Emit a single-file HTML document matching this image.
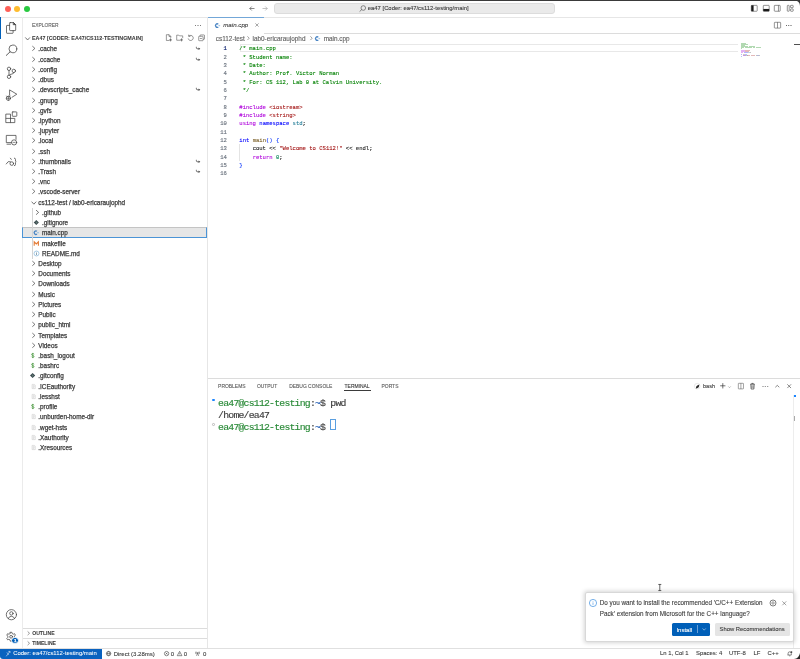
<!DOCTYPE html>
<html><head><meta charset="utf-8">
<style>
*{box-sizing:border-box;margin:0;padding:0}
html,body{width:800px;height:659px;overflow:hidden;background:#fff}
body{position:relative;font-family:"Liberation Sans",sans-serif;color:#3b3b3b}
.a{position:absolute}
.t{position:absolute;white-space:pre;line-height:1;-webkit-text-stroke:0.25px currentColor}
svg{position:absolute;overflow:visible}
.wrap{position:absolute;left:0;top:0;width:800px;height:659px;will-change:transform}
.mono{font-family:"Liberation Mono",monospace}
.ln{position:absolute;white-space:pre;font-family:"Liberation Mono",monospace;font-size:5.55px;height:8.333px;line-height:8.333px;-webkit-text-stroke:0.1px currentColor}
.ln span{-webkit-text-stroke:0.1px currentColor}
.num{position:absolute;width:12px;text-align:right;font-family:"Liberation Mono",monospace;font-size:5.55px;height:8.333px;line-height:8.333px;color:#6e7681;-webkit-text-stroke:0.15px currentColor}
.cm{color:#008000}.kw{color:#af00db}.st{color:#a31515}.bl{color:#0000ff}.ty{color:#267f99}.fn{color:#795e26}.vr{color:#1f1f1f}.nm{color:#098658}.b1{color:#0431fa}
.term{position:absolute;white-space:pre;font-family:"Liberation Mono",monospace;font-size:9.8px;letter-spacing:-0.78px;line-height:12px;height:12px;-webkit-text-stroke:0.15px currentColor}
.term span{-webkit-text-stroke:0.15px currentColor}
.tg{color:#2a8a38}
</style></head><body><div class="wrap">
<!-- top dark line -->
<div class="a" style="left:0;top:0;width:800px;height:1px;background:#3a3a3a"></div>
<!-- title bar -->
<svg style="left:794px;top:0" width="6" height="6" viewBox="0 0 6 6"><path d="M0 0 H6 V6 Q6 1 0 0Z" fill="#3a3a3a"/></svg>
<div class="a" style="left:0;top:16.6px;width:800px;height:0.5px;background:#e6e6e6"></div>
<div class="a" style="left:5.2px;top:5.9px;width:6px;height:6px;border-radius:50%;background:#fe5f57"></div>
<div class="a" style="left:14.3px;top:5.9px;width:6px;height:6px;border-radius:50%;background:#febc2e"></div>
<div class="a" style="left:24px;top:5.9px;width:6px;height:6px;border-radius:50%;background:#28c840"></div>
<!-- nav arrows -->
<svg style="left:249px;top:6.3px" width="6" height="5" viewBox="0 0 12 10"><path d="M11 5 H1.5 M5.5 1 L1.5 5 L5.5 9" fill="none" stroke="#3b3b3b" stroke-width="1.2"/></svg>
<svg style="left:261.5px;top:6.3px" width="6" height="5" viewBox="0 0 12 10"><path d="M1 5 H10.5 M6.5 1 L10.5 5 L6.5 9" fill="none" stroke="#9a9a9a" stroke-width="1.2"/></svg>
<!-- command center -->
<div class="a" style="left:273.5px;top:2.9px;width:281px;height:11px;border-radius:3px;background:#eaeaea;border:0.5px solid #dcdcdc"></div>
<svg style="left:358.7px;top:5.4px" width="7" height="7" viewBox="0 0 7 7"><circle cx="4.3" cy="3" r="2.3" fill="none" stroke="#444" stroke-width="0.6"/><path d="M2.7 4.6 L0.6 6.6" stroke="#444" stroke-width="0.65"/></svg>
<div class="t" style="left:367.8px;top:6.0px;font-size:5.89px;color:#3b3b3b;-webkit-text-stroke:0.1px #3b3b3b">ea47 [Coder: ea47/cs112-testing/main]</div>
<!-- layout icons -->
<svg style="left:750.5px;top:5.3px" width="6.5" height="6.6" viewBox="0 0 13 13"><rect x="0.6" y="0.6" width="11.8" height="11.8" rx="1.2" fill="none" stroke="#3b3b3b" stroke-width="1.1"/><rect x="0.6" y="0.6" width="4.6" height="11.8" fill="#1a1a1a"/></svg>
<svg style="left:762.5px;top:5.3px" width="6.5" height="6.6" viewBox="0 0 13 13"><rect x="0.6" y="0.6" width="11.8" height="11.8" rx="1.2" fill="none" stroke="#3b3b3b" stroke-width="1.1"/><rect x="0.6" y="7.8" width="11.8" height="4.6" fill="#1a1a1a"/></svg>
<svg style="left:774.3px;top:5.3px" width="6.5" height="6.6" viewBox="0 0 13 13"><rect x="0.6" y="0.6" width="11.8" height="11.8" rx="1.2" fill="none" stroke="#3b3b3b" stroke-width="1.1"/><path d="M8.9 0.6 V12.4" stroke="#3b3b3b" stroke-width="1.1"/></svg>
<svg style="left:787px;top:5.3px" width="6.5" height="6.6" viewBox="0 0 13 13"><rect x="0.6" y="0.6" width="3.8" height="11.8" rx="1" fill="none" stroke="#3b3b3b" stroke-width="1.1"/><rect x="7" y="0.6" width="5.4" height="4.6" rx="1" fill="none" stroke="#3b3b3b" stroke-width="1.1"/><rect x="7" y="7.8" width="5.4" height="4.6" rx="1" fill="none" stroke="#3b3b3b" stroke-width="1.1"/></svg>

<!-- activity bar -->
<div class="a" style="left:22px;top:16.8px;width:0.5px;height:631.4px;background:#ebebeb"></div>
<div class="a" style="left:0;top:16.8px;width:1px;height:22.2px;background:#005fb8"></div>
<svg style="left:0;top:0" width="22" height="659" viewBox="0 0 22 659" fill="none" stroke="#424242" stroke-width="0.75" stroke-linejoin="round" stroke-linecap="round">
<!-- explorer -->
<path d="M10.2 22.6 H13.6 L15.7 24.7 V30 Q15.7 30.6 15.1 30.6 H10.2 Q9.6 30.6 9.6 30 V23.2 Q9.6 22.6 10.2 22.6Z"/>
<path d="M13.6 22.6 L15.7 24.7 H13.6Z" fill="#424242"/>
<path d="M9.6 25.4 H7 Q6.5 25.4 6.5 25.9 V32.8 Q6.5 33.3 7 33.3 H12.6 Q13.1 33.3 13.1 32.8 V30.6"/>
<!-- search -->
<circle cx="12.9" cy="48.9" r="3.9"/>
<path d="M10.1 51.8 L6.3 55.4" stroke-width="0.85"/>
<!-- scm -->
<circle cx="9" cy="68.8" r="1.7"/>
<circle cx="9" cy="76.8" r="1.7"/>
<circle cx="13.8" cy="70.9" r="1.7"/>
<path d="M9 70.5 V75.1"/>
<path d="M13.8 72.6 Q13.8 73.8 12 74 Q9.6 74.2 9.4 75.2"/>
<!-- run & debug -->
<path d="M9.6 95.3 V89.9 L16.8 94.2 L12 97.3"/>
<circle cx="8.4" cy="98.3" r="2.1"/>
<path d="M6.3 98.3 H10.5 M8.4 96.2 V100.4 M6.6 96 L7.3 96.8 M10.2 96 L9.5 96.8" stroke-width="0.6"/>
<!-- extensions -->
<path d="M6.2 114.1 H10.5 V122.6 H6.2Z M6.2 118.4 H14.8 V122.6 H10.5"/>
<rect x="12.3" y="111.9" width="4.5" height="4.4" rx="0.5"/>
<!-- remote explorer -->
<path d="M11.4 142.6 H6.3 V135.4 H16 V139.4"/>
<path d="M7 144.2 H10.6"/>
<circle cx="14.1" cy="142.4" r="2.6"/>
<path d="M13 142.4 H15.2" stroke-width="0.6"/>
<!-- 7th -->
<path d="M6.2 163.9 Q8 160.3 10.4 161.6"/>
<circle cx="11.8" cy="163.6" r="1.8"/>
<path d="M10.4 158.2 L11.3 159.4"/>
<path d="M14.4 158.1 Q15.5 158.1 15.5 159.5 V161.2 L16.2 161.9 L15.5 162.6 V164.3 Q15.5 165.7 14.4 165.7"/>
<!-- account -->
<circle cx="11.4" cy="614.7" r="5.1"/>
<circle cx="11.4" cy="613.4" r="1.7"/>
<path d="M8.2 618.6 Q9 616.3 11.4 616.3 Q13.8 616.3 14.6 618.6"/>
<!-- gear -->
<path d="M10.3 632.3 H11.9 L12.2 633.6 L13.3 634.2 L14.6 633.7 L15.4 635.1 L14.4 636.1 V637.4 L15.4 638.4 L14.6 639.8 L13.3 639.3 L12.2 639.9 L11.9 641.2 H10.3 L10 639.9 L8.9 639.3 L7.6 639.8 L6.8 638.4 L7.8 637.4 V636.1 L6.8 635.1 L7.6 633.7 L8.9 634.2 L10 633.6Z"/>
<circle cx="11.1" cy="636.8" r="1.4"/>
</svg>
<div class="a" style="left:11.4px;top:637.1px;width:7.4px;height:7.4px;border-radius:50%;background:#005fb8;border:0.5px solid #fff"></div>
<div class="t" style="left:13.9px;top:638.9px;font-size:4.4px;font-weight:700;color:#fff">1</div>


<!-- sidebar -->
<div class="a" style="left:207.2px;top:16.8px;width:0.5px;height:631.4px;background:#e6e6e6"></div>
<div class="t" style="left:32px;top:24.2px;font-size:4.9px;color:#616161;-webkit-text-stroke:0.1px #616161">EXPLORER</div>
<div class="t" style="left:194.6px;top:21.6px;font-size:6px;color:#555;letter-spacing:0.5px">···</div>
<svg style="left:24.8px;top:37.1px" width="5.2" height="3.4" viewBox="0 0 5.2 3.4"><path d="M0.3 0.45 L2.6 3 L4.9 0.45" fill="none" stroke="#4a4a4a" stroke-width="0.75"/></svg>
<div class="t" style="left:32px;top:36.1px;font-size:5.37px;font-weight:700;color:#3b3b3b;-webkit-text-stroke:0.05px #3b3b3b">EA47 [CODER: EA47/CS112-TESTINGMAIN]</div>
<svg style="left:164.8px;top:34.4px" width="7.4" height="7.4" viewBox="0 0 16 16"><path d="M9.5 14 H3 V1.5 H9 L12.5 5 V8.5 M8.7 1.5 V5.5 H12.5" fill="none" stroke="#3b3b3b" stroke-width="1.1" stroke-linejoin="round"/><path d="M12 9.5 V16 M8.8 12.8 H15.2" stroke="#3b3b3b" stroke-width="1.3"/></svg>
<svg style="left:175.7px;top:34.4px" width="7.4" height="7.4" viewBox="0 0 16 16"><path d="M9.5 13.5 H1.5 V2.5 H6 L7.5 4 H14.5 V9" fill="none" stroke="#3b3b3b" stroke-width="1.1" stroke-linejoin="round"/><path d="M12 9.5 V16 M8.8 12.8 H15.2" stroke="#3b3b3b" stroke-width="1.3"/></svg>
<svg style="left:186.6px;top:34.4px" width="7.4" height="7.4" viewBox="0 0 16 16"><path d="M4.1 4.6 A5.5 5.5 0 1 1 2.6 9.8" fill="none" stroke="#3b3b3b" stroke-width="1.2"/><path d="M3.6 1.4 V5.1 H7.3" fill="none" stroke="#3b3b3b" stroke-width="1.2"/></svg>
<svg style="left:197.5px;top:34.4px" width="7.4" height="7.4" viewBox="0 0 16 16"><rect x="1.5" y="5" width="9.5" height="9.5" rx="1" fill="none" stroke="#3b3b3b" stroke-width="1.1"/><path d="M4.5 5 V3 Q4.5 2 5.5 2 H13 Q14 2 14 3 V10.5 Q14 11.5 13 11.5 H11 M4 9.8 H8.5" fill="none" stroke="#3b3b3b" stroke-width="1.1"/></svg>

<!-- selected row -->
<div class="a" style="left:22.4px;top:227.4px;width:184.9px;height:10.2px;background:#e6e6e6;border:0.6px solid #4b94d6;border-top-color:#c4c4c4"></div>
<!-- indent guide -->
<div class="a" style="left:31.9px;top:207.6px;width:0.5px;height:51.4px;background:#d4d4d4"></div>
<div class="t" style="left:38.30px;top:44.40px;height:10.220px;line-height:10.220px;font-size:6.36px;color:#3b3b3b">.cache</div>
<div class="t" style="left:38.30px;top:54.62px;height:10.220px;line-height:10.220px;font-size:6.36px;color:#3b3b3b">.ccache</div>
<div class="t" style="left:38.30px;top:64.84px;height:10.220px;line-height:10.220px;font-size:6.36px;color:#3b3b3b">.config</div>
<div class="t" style="left:38.30px;top:75.06px;height:10.220px;line-height:10.220px;font-size:6.36px;color:#3b3b3b">.dbus</div>
<div class="t" style="left:38.30px;top:85.28px;height:10.220px;line-height:10.220px;font-size:6.36px;color:#3b3b3b">.devscripts_cache</div>
<div class="t" style="left:38.30px;top:95.50px;height:10.220px;line-height:10.220px;font-size:6.36px;color:#3b3b3b">.gnupg</div>
<div class="t" style="left:38.30px;top:105.72px;height:10.220px;line-height:10.220px;font-size:6.36px;color:#3b3b3b">.gvfs</div>
<div class="t" style="left:38.30px;top:115.94px;height:10.220px;line-height:10.220px;font-size:6.36px;color:#3b3b3b">.ipython</div>
<div class="t" style="left:38.30px;top:126.16px;height:10.220px;line-height:10.220px;font-size:6.36px;color:#3b3b3b">.jupyter</div>
<div class="t" style="left:38.30px;top:136.38px;height:10.220px;line-height:10.220px;font-size:6.36px;color:#3b3b3b">.local</div>
<div class="t" style="left:38.30px;top:146.60px;height:10.220px;line-height:10.220px;font-size:6.36px;color:#3b3b3b">.ssh</div>
<div class="t" style="left:38.30px;top:156.82px;height:10.220px;line-height:10.220px;font-size:6.36px;color:#3b3b3b">.thumbnails</div>
<div class="t" style="left:38.30px;top:167.04px;height:10.220px;line-height:10.220px;font-size:6.36px;color:#3b3b3b">.Trash</div>
<div class="t" style="left:38.30px;top:177.26px;height:10.220px;line-height:10.220px;font-size:6.36px;color:#3b3b3b">.vnc</div>
<div class="t" style="left:38.30px;top:187.48px;height:10.220px;line-height:10.220px;font-size:6.36px;color:#3b3b3b">.vscode-server</div>
<div class="t" style="left:38.30px;top:197.70px;height:10.220px;line-height:10.220px;font-size:6.36px;color:#3b3b3b">cs112-test / lab0-ericaraujophd</div>
<div class="t" style="left:42.00px;top:207.92px;height:10.220px;line-height:10.220px;font-size:6.36px;color:#3b3b3b">.github</div>
<div class="t" style="left:42.00px;top:218.14px;height:10.220px;line-height:10.220px;font-size:6.36px;color:#3b3b3b">.gitignore</div>
<div class="t" style="left:42.00px;top:228.36px;height:10.220px;line-height:10.220px;font-size:6.36px;color:#3b3b3b">main.cpp</div>
<div class="t" style="left:42.00px;top:238.58px;height:10.220px;line-height:10.220px;font-size:6.36px;color:#3b3b3b">makefile</div>
<div class="t" style="left:42.00px;top:248.80px;height:10.220px;line-height:10.220px;font-size:6.36px;color:#3b3b3b">README.md</div>
<div class="t" style="left:38.30px;top:259.02px;height:10.220px;line-height:10.220px;font-size:6.36px;color:#3b3b3b">Desktop</div>
<div class="t" style="left:38.30px;top:269.24px;height:10.220px;line-height:10.220px;font-size:6.36px;color:#3b3b3b">Documents</div>
<div class="t" style="left:38.30px;top:279.46px;height:10.220px;line-height:10.220px;font-size:6.36px;color:#3b3b3b">Downloads</div>
<div class="t" style="left:38.30px;top:289.68px;height:10.220px;line-height:10.220px;font-size:6.36px;color:#3b3b3b">Music</div>
<div class="t" style="left:38.30px;top:299.90px;height:10.220px;line-height:10.220px;font-size:6.36px;color:#3b3b3b">Pictures</div>
<div class="t" style="left:38.30px;top:310.12px;height:10.220px;line-height:10.220px;font-size:6.36px;color:#3b3b3b">Public</div>
<div class="t" style="left:38.30px;top:320.34px;height:10.220px;line-height:10.220px;font-size:6.36px;color:#3b3b3b">public_html</div>
<div class="t" style="left:38.30px;top:330.56px;height:10.220px;line-height:10.220px;font-size:6.36px;color:#3b3b3b">Templates</div>
<div class="t" style="left:38.30px;top:340.78px;height:10.220px;line-height:10.220px;font-size:6.36px;color:#3b3b3b">Videos</div>
<div class="t" style="left:38.30px;top:351.00px;height:10.220px;line-height:10.220px;font-size:6.36px;color:#3b3b3b">.bash_logout</div>
<div class="t" style="left:38.30px;top:361.22px;height:10.220px;line-height:10.220px;font-size:6.36px;color:#3b3b3b">.bashrc</div>
<div class="t" style="left:38.30px;top:371.44px;height:10.220px;line-height:10.220px;font-size:6.36px;color:#3b3b3b">.gitconfig</div>
<div class="t" style="left:38.30px;top:381.66px;height:10.220px;line-height:10.220px;font-size:6.36px;color:#3b3b3b">.ICEauthority</div>
<div class="t" style="left:38.30px;top:391.88px;height:10.220px;line-height:10.220px;font-size:6.36px;color:#3b3b3b">.lesshst</div>
<div class="t" style="left:38.30px;top:402.10px;height:10.220px;line-height:10.220px;font-size:6.36px;color:#3b3b3b">.profile</div>
<div class="t" style="left:38.30px;top:412.32px;height:10.220px;line-height:10.220px;font-size:6.36px;color:#3b3b3b">.unburden-home-dir</div>
<div class="t" style="left:38.30px;top:422.54px;height:10.220px;line-height:10.220px;font-size:6.36px;color:#3b3b3b">.wget-hsts</div>
<div class="t" style="left:38.30px;top:432.76px;height:10.220px;line-height:10.220px;font-size:6.36px;color:#3b3b3b">.Xauthority</div>
<div class="t" style="left:38.30px;top:442.98px;height:10.220px;line-height:10.220px;font-size:6.36px;color:#3b3b3b">.Xresources</div>
<svg style="left:0;top:0" width="800" height="659" viewBox="0 0 800 659"><svg x="31.90" y="45.80" width="3.4" height="5.2" viewBox="0 0 3.4 5.2"><path d="M0.45 0.3 L3 2.6 L0.45 4.9" fill="none" stroke="#4a4a4a" stroke-width="0.75"/></svg>
<svg x="195.6" y="46.30" width="5" height="4.4" viewBox="0 0 5 4.4"><path d="M0.8 0.5 V1.4 Q0.8 2.5 2 2.5 H3.6" fill="none" stroke="#4a4a4a" stroke-width="0.85"/><path d="M3 1.2 L4.7 2.5 L3 3.8Z" fill="#4a4a4a"/></svg>
<svg x="31.90" y="56.80" width="3.4" height="5.2" viewBox="0 0 3.4 5.2"><path d="M0.45 0.3 L3 2.6 L0.45 4.9" fill="none" stroke="#4a4a4a" stroke-width="0.75"/></svg>
<svg x="195.6" y="57.30" width="5" height="4.4" viewBox="0 0 5 4.4"><path d="M0.8 0.5 V1.4 Q0.8 2.5 2 2.5 H3.6" fill="none" stroke="#4a4a4a" stroke-width="0.85"/><path d="M3 1.2 L4.7 2.5 L3 3.8Z" fill="#4a4a4a"/></svg>
<svg x="31.90" y="66.80" width="3.4" height="5.2" viewBox="0 0 3.4 5.2"><path d="M0.45 0.3 L3 2.6 L0.45 4.9" fill="none" stroke="#4a4a4a" stroke-width="0.75"/></svg>
<svg x="31.90" y="76.80" width="3.4" height="5.2" viewBox="0 0 3.4 5.2"><path d="M0.45 0.3 L3 2.6 L0.45 4.9" fill="none" stroke="#4a4a4a" stroke-width="0.75"/></svg>
<svg x="31.90" y="86.80" width="3.4" height="5.2" viewBox="0 0 3.4 5.2"><path d="M0.45 0.3 L3 2.6 L0.45 4.9" fill="none" stroke="#4a4a4a" stroke-width="0.75"/></svg>
<svg x="195.6" y="87.30" width="5" height="4.4" viewBox="0 0 5 4.4"><path d="M0.8 0.5 V1.4 Q0.8 2.5 2 2.5 H3.6" fill="none" stroke="#4a4a4a" stroke-width="0.85"/><path d="M3 1.2 L4.7 2.5 L3 3.8Z" fill="#4a4a4a"/></svg>
<svg x="31.90" y="97.80" width="3.4" height="5.2" viewBox="0 0 3.4 5.2"><path d="M0.45 0.3 L3 2.6 L0.45 4.9" fill="none" stroke="#4a4a4a" stroke-width="0.75"/></svg>
<svg x="31.90" y="107.80" width="3.4" height="5.2" viewBox="0 0 3.4 5.2"><path d="M0.45 0.3 L3 2.6 L0.45 4.9" fill="none" stroke="#4a4a4a" stroke-width="0.75"/></svg>
<svg x="31.90" y="117.80" width="3.4" height="5.2" viewBox="0 0 3.4 5.2"><path d="M0.45 0.3 L3 2.6 L0.45 4.9" fill="none" stroke="#4a4a4a" stroke-width="0.75"/></svg>
<svg x="31.90" y="127.80" width="3.4" height="5.2" viewBox="0 0 3.4 5.2"><path d="M0.45 0.3 L3 2.6 L0.45 4.9" fill="none" stroke="#4a4a4a" stroke-width="0.75"/></svg>
<svg x="31.90" y="137.80" width="3.4" height="5.2" viewBox="0 0 3.4 5.2"><path d="M0.45 0.3 L3 2.6 L0.45 4.9" fill="none" stroke="#4a4a4a" stroke-width="0.75"/></svg>
<svg x="31.90" y="148.80" width="3.4" height="5.2" viewBox="0 0 3.4 5.2"><path d="M0.45 0.3 L3 2.6 L0.45 4.9" fill="none" stroke="#4a4a4a" stroke-width="0.75"/></svg>
<svg x="31.90" y="158.80" width="3.4" height="5.2" viewBox="0 0 3.4 5.2"><path d="M0.45 0.3 L3 2.6 L0.45 4.9" fill="none" stroke="#4a4a4a" stroke-width="0.75"/></svg>
<svg x="195.6" y="159.30" width="5" height="4.4" viewBox="0 0 5 4.4"><path d="M0.8 0.5 V1.4 Q0.8 2.5 2 2.5 H3.6" fill="none" stroke="#4a4a4a" stroke-width="0.85"/><path d="M3 1.2 L4.7 2.5 L3 3.8Z" fill="#4a4a4a"/></svg>
<svg x="31.90" y="168.80" width="3.4" height="5.2" viewBox="0 0 3.4 5.2"><path d="M0.45 0.3 L3 2.6 L0.45 4.9" fill="none" stroke="#4a4a4a" stroke-width="0.75"/></svg>
<svg x="195.6" y="169.30" width="5" height="4.4" viewBox="0 0 5 4.4"><path d="M0.8 0.5 V1.4 Q0.8 2.5 2 2.5 H3.6" fill="none" stroke="#4a4a4a" stroke-width="0.85"/><path d="M3 1.2 L4.7 2.5 L3 3.8Z" fill="#4a4a4a"/></svg>
<svg x="31.90" y="178.80" width="3.4" height="5.2" viewBox="0 0 3.4 5.2"><path d="M0.45 0.3 L3 2.6 L0.45 4.9" fill="none" stroke="#4a4a4a" stroke-width="0.75"/></svg>
<svg x="31.90" y="188.80" width="3.4" height="5.2" viewBox="0 0 3.4 5.2"><path d="M0.45 0.3 L3 2.6 L0.45 4.9" fill="none" stroke="#4a4a4a" stroke-width="0.75"/></svg>
<svg x="31.30" y="201.20" width="5.2" height="3.4" viewBox="0 0 5.2 3.4"><path d="M0.3 0.45 L2.6 3 L4.9 0.45" fill="none" stroke="#4a4a4a" stroke-width="0.75"/></svg>
<svg x="35.60" y="209.80" width="3.4" height="5.2" viewBox="0 0 3.4 5.2"><path d="M0.45 0.3 L3 2.6 L0.45 4.9" fill="none" stroke="#4a4a4a" stroke-width="0.75"/></svg>
<svg x="33.60" y="219.80" width="5.4" height="5.4" viewBox="0 0 10 10"><path d="M5 0.2 L9.8 5 L5 9.8 L0.2 5Z" fill="#3b4a50"/><path d="M4 3 L6.5 5.5 M5 4 V7" stroke="#8fb39a" stroke-width="0.9"/></svg>
<svg x="33.70" y="230.10" width="5.4" height="5.2" viewBox="0 0 5.4 5.2"><path d="M3.3 1.2 A1.75 1.75 0 1 0 3.3 4.0" fill="none" stroke="#4a85c4" stroke-width="1.3"/><path d="M3.4 2.6 H5.2 M4.3 1.9 V3.3" stroke="#7fb3e0" stroke-width="0.55"/></svg>
<svg x="33.60" y="241.30" width="5.4" height="4.4" viewBox="0 0 5.4 4.4"><path d="M0.6 4.4 V0.5 L2.7 2.6 L4.8 0.5 V4.4" fill="none" stroke="#e37933" stroke-width="1.05" stroke-linejoin="miter"/></svg>
<svg x="33.70" y="250.70" width="5.6" height="5.6" viewBox="0 0 10 10"><circle cx="5" cy="5" r="4.4" fill="none" stroke="#5b9fd0" stroke-width="0.95"/><path d="M5 4.2 V7.8" stroke="#4a6a80" stroke-width="1.1"/><circle cx="5" cy="2.6" r="0.7" fill="#4a6a80"/></svg>
<svg x="31.90" y="260.80" width="3.4" height="5.2" viewBox="0 0 3.4 5.2"><path d="M0.45 0.3 L3 2.6 L0.45 4.9" fill="none" stroke="#4a4a4a" stroke-width="0.75"/></svg>
<svg x="31.90" y="270.80" width="3.4" height="5.2" viewBox="0 0 3.4 5.2"><path d="M0.45 0.3 L3 2.6 L0.45 4.9" fill="none" stroke="#4a4a4a" stroke-width="0.75"/></svg>
<svg x="31.90" y="280.80" width="3.4" height="5.2" viewBox="0 0 3.4 5.2"><path d="M0.45 0.3 L3 2.6 L0.45 4.9" fill="none" stroke="#4a4a4a" stroke-width="0.75"/></svg>
<svg x="31.90" y="291.80" width="3.4" height="5.2" viewBox="0 0 3.4 5.2"><path d="M0.45 0.3 L3 2.6 L0.45 4.9" fill="none" stroke="#4a4a4a" stroke-width="0.75"/></svg>
<svg x="31.90" y="301.80" width="3.4" height="5.2" viewBox="0 0 3.4 5.2"><path d="M0.45 0.3 L3 2.6 L0.45 4.9" fill="none" stroke="#4a4a4a" stroke-width="0.75"/></svg>
<svg x="31.90" y="311.80" width="3.4" height="5.2" viewBox="0 0 3.4 5.2"><path d="M0.45 0.3 L3 2.6 L0.45 4.9" fill="none" stroke="#4a4a4a" stroke-width="0.75"/></svg>
<svg x="31.90" y="321.80" width="3.4" height="5.2" viewBox="0 0 3.4 5.2"><path d="M0.45 0.3 L3 2.6 L0.45 4.9" fill="none" stroke="#4a4a4a" stroke-width="0.75"/></svg>
<svg x="31.90" y="332.80" width="3.4" height="5.2" viewBox="0 0 3.4 5.2"><path d="M0.45 0.3 L3 2.6 L0.45 4.9" fill="none" stroke="#4a4a4a" stroke-width="0.75"/></svg>
<svg x="31.90" y="342.80" width="3.4" height="5.2" viewBox="0 0 3.4 5.2"><path d="M0.45 0.3 L3 2.6 L0.45 4.9" fill="none" stroke="#4a4a4a" stroke-width="0.75"/></svg>
<svg x="31.00" y="352.90" width="3.6" height="5.2" viewBox="0 0 3.6 5.2"><path d="M3 1.3 Q2.8 0.7 1.8 0.7 Q0.6 0.7 0.6 1.6 Q0.6 2.4 1.8 2.6 Q3 2.8 3 3.6 Q3 4.5 1.8 4.5 Q0.8 4.5 0.5 3.8 M1.8 0 V5.2" fill="none" stroke="#4f9a45" stroke-width="0.8"/></svg>
<svg x="31.00" y="362.90" width="3.6" height="5.2" viewBox="0 0 3.6 5.2"><path d="M3 1.3 Q2.8 0.7 1.8 0.7 Q0.6 0.7 0.6 1.6 Q0.6 2.4 1.8 2.6 Q3 2.8 3 3.6 Q3 4.5 1.8 4.5 Q0.8 4.5 0.5 3.8 M1.8 0 V5.2" fill="none" stroke="#4f9a45" stroke-width="0.8"/></svg>
<svg x="29.90" y="372.80" width="5.4" height="5.4" viewBox="0 0 10 10"><path d="M5 0.2 L9.8 5 L5 9.8 L0.2 5Z" fill="#3b4a50"/><path d="M4 3 L6.5 5.5 M5 4 V7" stroke="#8fb39a" stroke-width="0.9"/></svg>
<svg x="31.70" y="384.00" width="4" height="5" viewBox="0 0 4 5"><path d="M0.4 0.4 H2.8 L3.6 1.2 V4.6 H0.4Z" fill="none" stroke="#c4c4c4" stroke-width="0.5"/><path d="M1 1.6 H3 M1 2.6 H3 M1 3.6 H2.6" stroke="#c0c0c0" stroke-width="0.45"/></svg>
<svg x="31.70" y="394.00" width="4" height="5" viewBox="0 0 4 5"><path d="M0.4 0.4 H2.8 L3.6 1.2 V4.6 H0.4Z" fill="none" stroke="#c4c4c4" stroke-width="0.5"/><path d="M1 1.6 H3 M1 2.6 H3 M1 3.6 H2.6" stroke="#c0c0c0" stroke-width="0.45"/></svg>
<svg x="31.00" y="403.90" width="3.6" height="5.2" viewBox="0 0 3.6 5.2"><path d="M3 1.3 Q2.8 0.7 1.8 0.7 Q0.6 0.7 0.6 1.6 Q0.6 2.4 1.8 2.6 Q3 2.8 3 3.6 Q3 4.5 1.8 4.5 Q0.8 4.5 0.5 3.8 M1.8 0 V5.2" fill="none" stroke="#4f9a45" stroke-width="0.8"/></svg>
<svg x="31.70" y="414.00" width="4" height="5" viewBox="0 0 4 5"><path d="M0.4 0.4 H2.8 L3.6 1.2 V4.6 H0.4Z" fill="none" stroke="#c4c4c4" stroke-width="0.5"/><path d="M1 1.6 H3 M1 2.6 H3 M1 3.6 H2.6" stroke="#c0c0c0" stroke-width="0.45"/></svg>
<svg x="31.70" y="425.00" width="4" height="5" viewBox="0 0 4 5"><path d="M0.4 0.4 H2.8 L3.6 1.2 V4.6 H0.4Z" fill="none" stroke="#c4c4c4" stroke-width="0.5"/><path d="M1 1.6 H3 M1 2.6 H3 M1 3.6 H2.6" stroke="#c0c0c0" stroke-width="0.45"/></svg>
<svg x="31.70" y="435.00" width="4" height="5" viewBox="0 0 4 5"><path d="M0.4 0.4 H2.8 L3.6 1.2 V4.6 H0.4Z" fill="none" stroke="#c4c4c4" stroke-width="0.5"/><path d="M1 1.6 H3 M1 2.6 H3 M1 3.6 H2.6" stroke="#c0c0c0" stroke-width="0.45"/></svg>
<svg x="31.70" y="445.00" width="4" height="5" viewBox="0 0 4 5"><path d="M0.4 0.4 H2.8 L3.6 1.2 V4.6 H0.4Z" fill="none" stroke="#c4c4c4" stroke-width="0.5"/><path d="M1 1.6 H3 M1 2.6 H3 M1 3.6 H2.6" stroke="#c0c0c0" stroke-width="0.45"/></svg></svg>

<!-- outline / timeline -->
<div class="a" style="left:22.5px;top:628.2px;width:184.7px;height:0.5px;background:#dcdcdc"></div>
<div class="a" style="left:22.5px;top:638.2px;width:184.7px;height:0.5px;background:#dcdcdc"></div>
<svg style="left:27.2px;top:631.3px" width="3" height="4.5" viewBox="0 0 3 4.5"><path d="M0.6 0.4 L2.5 2.25 L0.6 4.1" fill="none" stroke="#424242" stroke-width="0.55"/></svg>
<svg style="left:27.2px;top:641.3px" width="3" height="4.5" viewBox="0 0 3 4.5"><path d="M0.6 0.4 L2.5 2.25 L0.6 4.1" fill="none" stroke="#424242" stroke-width="0.55"/></svg>
<div class="t" style="left:32.2px;top:631px;font-size:5.1px;font-weight:700;color:#3b3b3b;-webkit-text-stroke:0.05px #3b3b3b">OUTLINE</div>
<div class="t" style="left:32.2px;top:641px;font-size:5.1px;font-weight:700;color:#3b3b3b;-webkit-text-stroke:0.05px #3b3b3b">TIMELINE</div>

<!-- editor tabs -->
<div class="a" style="left:207.6px;top:32.6px;width:592.4px;height:0.5px;background:#dcdcdc"></div>
<div class="a" style="left:207.6px;top:16.6px;width:56.2px;height:17px;background:#fff"></div>
<div class="a" style="left:207.6px;top:16.6px;width:56.2px;height:0.8px;background:#005fb8;opacity:0.55"></div>
<!-- tab -->
<svg style="left:215.20px;top:22.60px" width="5.4" height="5.2" viewBox="0 0 5.4 5.2"><path d="M3.3 1.2 A1.75 1.75 0 1 0 3.3 4.0" fill="none" stroke="#4a85c4" stroke-width="1.3"/><path d="M3.4 2.6 H5.2 M4.3 1.9 V3.3" stroke="#7fb3e0" stroke-width="0.55"/></svg>
<div class="t" style="left:223.2px;top:22.3px;font-size:6.2px;font-style:italic;color:#3b3b3b;-webkit-text-stroke:0.1px #3b3b3b">main.cpp</div>
<svg style="left:255.3px;top:23.4px" width="4" height="4" viewBox="0 0 8 8"><path d="M0.8 0.8 L7.2 7.2 M7.2 0.8 L0.8 7.2" stroke="#3b3b3b" stroke-width="0.9"/></svg>
<!-- editor actions -->
<svg style="left:774.2px;top:21.8px" width="7" height="6.4" viewBox="0 0 14 13"><rect x="0.6" y="0.6" width="12.8" height="11.8" rx="1.2" fill="none" stroke="#3b3b3b" stroke-width="1.1"/><path d="M7 0.6 V12.4" stroke="#3b3b3b" stroke-width="1.1"/></svg>
<div class="t" style="left:785.5px;top:21.6px;font-size:6px;color:#3b3b3b;letter-spacing:0.2px">···</div>
<!-- breadcrumbs -->
<div class="t" style="left:215.8px;top:35.7px;font-size:6.4px;color:#616161;-webkit-text-stroke:0.12px #616161">cs112-test</div>
<svg style="left:246.9px;top:36.2px" width="2.6" height="4.4" viewBox="0 0 2.6 4.4"><path d="M0.4 0.3 L2.2 2.2 L0.4 4.1" fill="none" stroke="#616161" stroke-width="0.6"/></svg>
<div class="t" style="left:252.5px;top:35.7px;font-size:6.4px;color:#616161;-webkit-text-stroke:0.12px #616161">lab0-ericaraujophd</div>
<svg style="left:309.9px;top:36.2px" width="2.6" height="4.4" viewBox="0 0 2.6 4.4"><path d="M0.4 0.3 L2.2 2.2 L0.4 4.1" fill="none" stroke="#616161" stroke-width="0.6"/></svg>
<svg style="left:315.20px;top:36.30px" width="5.4" height="5.2" viewBox="0 0 5.4 5.2"><path d="M3.3 1.2 A1.75 1.75 0 1 0 3.3 4.0" fill="none" stroke="#4a85c4" stroke-width="1.3"/><path d="M3.4 2.6 H5.2 M4.3 1.9 V3.3" stroke="#7fb3e0" stroke-width="0.55"/></svg>
<div class="t" style="left:323.7px;top:35.7px;font-size:6.4px;color:#616161;-webkit-text-stroke:0.12px #616161">main.cpp</div>
<!-- current line highlight -->
<div class="a" style="left:240.2px;top:43.5px;width:498px;height:8.1px;border:0.5px solid #e8e8e8;border-right:none"></div>
<!-- indent guides -->
<div class="a" style="left:239.3px;top:144.4px;width:0.5px;height:16.6px;background:#e4e4e4"></div>
<div class="num" style="left:214.8px;top:45.20px;color:#0b216f">1</div>
<div class="ln" style="left:239.3px;top:45.20px;color:#000"><span class="cm">/* main.cpp</span></div>
<div class="num" style="left:214.8px;top:53.53px;color:#6e7681">2</div>
<div class="ln" style="left:239.3px;top:53.53px;color:#000"><span class="cm"> * Student name:</span></div>
<div class="num" style="left:214.8px;top:61.87px;color:#6e7681">3</div>
<div class="ln" style="left:239.3px;top:61.87px;color:#000"><span class="cm"> * Date:</span></div>
<div class="num" style="left:214.8px;top:70.20px;color:#6e7681">4</div>
<div class="ln" style="left:239.3px;top:70.20px;color:#000"><span class="cm"> * Author: Prof. Victor Norman</span></div>
<div class="num" style="left:214.8px;top:78.53px;color:#6e7681">5</div>
<div class="ln" style="left:239.3px;top:78.53px;color:#000"><span class="cm"> * For: CS 112, Lab 0 at Calvin University.</span></div>
<div class="num" style="left:214.8px;top:86.87px;color:#6e7681">6</div>
<div class="ln" style="left:239.3px;top:86.87px;color:#000"><span class="cm"> */</span></div>
<div class="num" style="left:214.8px;top:95.20px;color:#6e7681">7</div>
<div class="num" style="left:214.8px;top:103.53px;color:#6e7681">8</div>
<div class="ln" style="left:239.3px;top:103.53px;color:#000"><span class="kw">#include</span> <span class="st">&lt;iostream&gt;</span></div>
<div class="num" style="left:214.8px;top:111.86px;color:#6e7681">9</div>
<div class="ln" style="left:239.3px;top:111.86px;color:#000"><span class="kw">#include</span> <span class="st">&lt;string&gt;</span></div>
<div class="num" style="left:214.8px;top:120.20px;color:#6e7681">10</div>
<div class="ln" style="left:239.3px;top:120.20px;color:#000"><span class="kw">using</span> <span class="bl">namespace</span> <span class="ty">std</span>;</div>
<div class="num" style="left:214.8px;top:128.53px;color:#6e7681">11</div>
<div class="num" style="left:214.8px;top:136.86px;color:#6e7681">12</div>
<div class="ln" style="left:239.3px;top:136.86px;color:#000"><span class="bl">int</span> <span class="fn">main</span><span class="b1">()</span> <span class="b1">{</span></div>
<div class="num" style="left:214.8px;top:145.20px;color:#6e7681">13</div>
<div class="ln" style="left:239.3px;top:145.20px;color:#000">    <span class="vr">cout</span> &lt;&lt; <span class="st">"Welcome to CS112!"</span> &lt;&lt; <span class="vr">endl</span>;</div>
<div class="num" style="left:214.8px;top:153.53px;color:#6e7681">14</div>
<div class="ln" style="left:239.3px;top:153.53px;color:#000">    <span class="kw">return</span> <span class="nm">0</span>;</div>
<div class="num" style="left:214.8px;top:161.86px;color:#6e7681">15</div>
<div class="ln" style="left:239.3px;top:161.86px;color:#000"><span class="b1">}</span></div>
<div class="num" style="left:214.8px;top:170.19px;color:#6e7681">16</div>
<!-- minimap -->
<div class="a" style="left:741.00px;top:43.40px;width:0.92px;height:0.8px;background:#7fbf7f;opacity:0.6"></div>
<div class="a" style="left:742.38px;top:43.40px;width:3.68px;height:0.8px;background:#7fbf7f;opacity:0.6"></div>
<div class="a" style="left:741.46px;top:44.33px;width:0.46px;height:0.8px;background:#7fbf7f;opacity:0.6"></div>
<div class="a" style="left:742.38px;top:44.33px;width:3.22px;height:0.8px;background:#7fbf7f;opacity:0.6"></div>
<div class="a" style="left:746.06px;top:44.33px;width:2.30px;height:0.8px;background:#7fbf7f;opacity:0.6"></div>
<div class="a" style="left:741.46px;top:45.26px;width:0.46px;height:0.8px;background:#7fbf7f;opacity:0.6"></div>
<div class="a" style="left:742.38px;top:45.26px;width:2.30px;height:0.8px;background:#7fbf7f;opacity:0.6"></div>
<div class="a" style="left:741.46px;top:46.19px;width:0.46px;height:0.8px;background:#7fbf7f;opacity:0.6"></div>
<div class="a" style="left:742.38px;top:46.19px;width:3.22px;height:0.8px;background:#7fbf7f;opacity:0.6"></div>
<div class="a" style="left:746.06px;top:46.19px;width:2.30px;height:0.8px;background:#7fbf7f;opacity:0.6"></div>
<div class="a" style="left:748.82px;top:46.19px;width:2.76px;height:0.8px;background:#7fbf7f;opacity:0.6"></div>
<div class="a" style="left:752.04px;top:46.19px;width:2.76px;height:0.8px;background:#7fbf7f;opacity:0.6"></div>
<div class="a" style="left:741.46px;top:47.12px;width:0.46px;height:0.8px;background:#7fbf7f;opacity:0.6"></div>
<div class="a" style="left:742.38px;top:47.12px;width:1.84px;height:0.8px;background:#7fbf7f;opacity:0.6"></div>
<div class="a" style="left:744.68px;top:47.12px;width:0.92px;height:0.8px;background:#7fbf7f;opacity:0.6"></div>
<div class="a" style="left:746.06px;top:47.12px;width:1.84px;height:0.8px;background:#7fbf7f;opacity:0.6"></div>
<div class="a" style="left:748.36px;top:47.12px;width:1.38px;height:0.8px;background:#7fbf7f;opacity:0.6"></div>
<div class="a" style="left:750.20px;top:47.12px;width:0.46px;height:0.8px;background:#7fbf7f;opacity:0.6"></div>
<div class="a" style="left:751.12px;top:47.12px;width:0.92px;height:0.8px;background:#7fbf7f;opacity:0.6"></div>
<div class="a" style="left:752.50px;top:47.12px;width:2.76px;height:0.8px;background:#7fbf7f;opacity:0.6"></div>
<div class="a" style="left:755.72px;top:47.12px;width:5.06px;height:0.8px;background:#7fbf7f;opacity:0.6"></div>
<div class="a" style="left:741.46px;top:48.05px;width:0.92px;height:0.8px;background:#7fbf7f;opacity:0.6"></div>
<div class="a" style="left:741.00px;top:49.91px;width:3.68px;height:0.8px;background:#d27fed;opacity:0.6"></div>
<div class="a" style="left:745.14px;top:49.91px;width:4.60px;height:0.8px;background:#d18a8a;opacity:0.6"></div>
<div class="a" style="left:741.00px;top:50.84px;width:3.68px;height:0.8px;background:#d27fed;opacity:0.6"></div>
<div class="a" style="left:745.14px;top:50.84px;width:3.68px;height:0.8px;background:#d18a8a;opacity:0.6"></div>
<div class="a" style="left:741.00px;top:51.77px;width:2.30px;height:0.8px;background:#d27fed;opacity:0.6"></div>
<div class="a" style="left:743.76px;top:51.77px;width:4.14px;height:0.8px;background:#7f7fff;opacity:0.6"></div>
<div class="a" style="left:748.36px;top:51.77px;width:1.38px;height:0.8px;background:#92bfcc;opacity:0.6"></div>
<div class="a" style="left:749.74px;top:51.77px;width:0.46px;height:0.8px;background:#999;opacity:0.6"></div>
<div class="a" style="left:741.00px;top:53.63px;width:1.38px;height:0.8px;background:#7f7fff;opacity:0.6"></div>
<div class="a" style="left:742.84px;top:53.63px;width:1.84px;height:0.8px;background:#bcaf92;opacity:0.6"></div>
<div class="a" style="left:744.68px;top:53.63px;width:0.92px;height:0.8px;background:#8198fc;opacity:0.6"></div>
<div class="a" style="left:746.06px;top:53.63px;width:0.46px;height:0.8px;background:#8198fc;opacity:0.6"></div>
<div class="a" style="left:742.84px;top:54.56px;width:1.84px;height:0.8px;background:#7f87bf;opacity:0.6"></div>
<div class="a" style="left:745.14px;top:54.56px;width:0.92px;height:0.8px;background:#999;opacity:0.6"></div>
<div class="a" style="left:746.52px;top:54.56px;width:3.68px;height:0.8px;background:#d18a8a;opacity:0.6"></div>
<div class="a" style="left:750.66px;top:54.56px;width:0.92px;height:0.8px;background:#d18a8a;opacity:0.6"></div>
<div class="a" style="left:752.04px;top:54.56px;width:3.22px;height:0.8px;background:#d18a8a;opacity:0.6"></div>
<div class="a" style="left:755.72px;top:54.56px;width:0.92px;height:0.8px;background:#999;opacity:0.6"></div>
<div class="a" style="left:757.10px;top:54.56px;width:1.84px;height:0.8px;background:#7f87bf;opacity:0.6"></div>
<div class="a" style="left:758.94px;top:54.56px;width:0.46px;height:0.8px;background:#999;opacity:0.6"></div>
<div class="a" style="left:742.84px;top:55.49px;width:2.76px;height:0.8px;background:#d27fed;opacity:0.6"></div>
<div class="a" style="left:746.06px;top:55.49px;width:0.46px;height:0.8px;background:#83c2ab;opacity:0.6"></div>
<div class="a" style="left:746.52px;top:55.49px;width:0.46px;height:0.8px;background:#999;opacity:0.6"></div>
<div class="a" style="left:741.00px;top:56.42px;width:0.46px;height:0.8px;background:#8198fc;opacity:0.6"></div>
<!-- overview ruler cursor -->
<div class="a" style="left:793.5px;top:43.6px;width:6.5px;height:0.9px;background:#505050"></div>


<!-- panel -->
<div class="a" style="left:207.6px;top:378.2px;width:592.4px;height:0.5px;background:#dcdcdc"></div>
<div class="t" style="left:218.1px;top:385.2px;font-size:4.95px;color:#616161;-webkit-text-stroke:0.12px currentColor">PROBLEMS</div>
<div class="t" style="left:256.9px;top:385.2px;font-size:4.95px;color:#616161;-webkit-text-stroke:0.12px currentColor">OUTPUT</div>
<div class="t" style="left:289.2px;top:385.2px;font-size:4.95px;color:#616161;-webkit-text-stroke:0.12px currentColor">DEBUG CONSOLE</div>
<div class="t" style="left:344.6px;top:385.2px;font-size:4.95px;color:#3b3b3b;-webkit-text-stroke:0.12px currentColor">TERMINAL</div>
<div class="a" style="left:344.4px;top:390.4px;width:26.3px;height:0.6px;background:#3b3b3b"></div>
<div class="t" style="left:381.5px;top:385.2px;font-size:4.95px;color:#616161;-webkit-text-stroke:0.12px currentColor">PORTS</div>
<!-- terminal actions -->
<svg style="left:693.8px;top:383.2px" width="6.4" height="6.4" viewBox="0 0 11 11"><circle cx="5.5" cy="5.5" r="4.9" fill="none" stroke="#c8c8c8" stroke-width="0.7"/><path d="M3.2 9.6 Q3.4 5.2 5.6 4.2 Q7.5 3.4 9.2 2.6 Q9 6.8 7 8 Q5.4 8.9 3.2 9.6Z" fill="#2b2b2b"/></svg>
<div class="t" style="left:703px;top:383.6px;font-size:5.6px;color:#3b3b3b;-webkit-text-stroke:0.1px #3b3b3b">bash</div>
<svg style="left:719.6px;top:383.4px" width="5.6" height="5.6" viewBox="0 0 11 11"><path d="M5.5 0.3 V10.7 M0.3 5.5 H10.7" stroke="#2b2b2b" stroke-width="1.3"/></svg>
<svg style="left:728.4px;top:385.5px" width="3" height="2" viewBox="0 0 4.5 3"><path d="M0.4 0.6 L2.25 2.5 L4.1 0.6" fill="none" stroke="#555" stroke-width="0.6"/></svg>
<svg style="left:738.2px;top:383.2px" width="5.8" height="6.2" viewBox="0 0 12 13"><rect x="0.6" y="0.6" width="10.8" height="11.8" rx="1" fill="none" stroke="#3b3b3b" stroke-width="1"/><path d="M6 0.6 V12.4" stroke="#3b3b3b" stroke-width="1"/></svg>
<svg style="left:750.2px;top:383.0px" width="5" height="6.4" viewBox="0 0 10 13"><path d="M0.5 2.5 H9.5 M3.5 2.3 V0.8 H6.5 V2.3 M1.5 2.5 L2.2 12.3 H7.8 L8.5 2.5" fill="none" stroke="#2b2b2b" stroke-width="1.3"/><path d="M3.8 4.5 V10.5 M6.2 4.5 V10.5" stroke="#2b2b2b" stroke-width="1"/></svg>
<div class="t" style="left:761.9px;top:382.8px;font-size:6px;color:#666;letter-spacing:0.45px">···</div>
<svg style="left:774.6px;top:384.9px" width="4.6" height="2.6" viewBox="0 0 9 5"><path d="M0.6 4.4 L4.5 0.7 L8.4 4.4" fill="none" stroke="#2b2b2b" stroke-width="1.1"/></svg>
<svg style="left:786.6px;top:384.2px" width="4.4" height="4.4" viewBox="0 0 8 8"><path d="M0.6 0.6 L7.4 7.4 M7.4 0.6 L0.6 7.4" stroke="#2b2b2b" stroke-width="1"/></svg>
<!-- terminal -->
<div class="a" style="left:212.3px;top:399.1px;width:2.4px;height:2.4px;border-radius:50%;background:#1a85ff"></div>
<div class="a" style="left:212.3px;top:423.4px;width:2.4px;height:2.4px;border-radius:50%;border:0.4px solid #bbb"></div>
<div class="term" style="left:218.1px;top:397.7px"><span class="tg">ea47@cs112-testing</span><span style="color:#3b3b3b">:</span><span style="color:#1a57b0">~</span><span style="color:#3b3b3b">$ pwd</span></div>
<div class="term" style="left:218.1px;top:409.7px;color:#3b3b3b">/home/ea47</div>
<div class="term" style="left:218.1px;top:421.7px"><span class="tg">ea47@cs112-testing</span><span style="color:#3b3b3b">:</span><span style="color:#1a57b0">~</span><span style="color:#3b3b3b">$ </span></div>
<div class="a" style="left:330.3px;top:418.8px;width:5.5px;height:11.5px;border:0.7px solid #5a9fe0"></div>
<!-- terminal scrollbar/overview -->
<div class="a" style="left:793.4px;top:394.6px;width:0.5px;height:253.6px;background:#ededed"></div>
<div class="a" style="left:793.6px;top:395.2px;width:2.2px;height:2px;background:#1a85ff"></div>
<div class="a" style="left:793.6px;top:416.4px;width:1.6px;height:4.8px;background:#aaa"></div>


<!-- status bar -->
<div class="a" style="left:0;top:648.4px;width:800px;height:10.6px;background:#fff;border-top:0.5px solid #e0e0e0"></div>
<div class="a" style="left:0;top:648.9px;width:101.8px;height:10.1px;background:#0a62bf;border-bottom-left-radius:3px"></div>
<svg style="left:0;top:0" width="800" height="659" viewBox="0 0 800 659"><path d="M6.2 656.3 L10 651.3 M6.9 652.4 L8.8 654.8 M8.3 651.4 H10 V653" fill="none" stroke="#dce8f7" stroke-width="0.6"/></svg>
<div class="t" style="left:13.2px;top:650.6px;font-size:5.93px;color:#fff;-webkit-text-stroke:0.05px #fff">Coder: ea47/cs112-testing/main</div>
<svg style="left:106.3px;top:651.1px" width="5.2" height="5.2" viewBox="0 0 10 10"><circle cx="5" cy="5" r="4.3" fill="none" stroke="#3b3b3b" stroke-width="1.1"/><path d="M0.7 5 H9.3 M5 0.7 C2.2 3 2.2 7 5 9.3 M5 0.7 C7.8 3 7.8 7 5 9.3" fill="none" stroke="#3b3b3b" stroke-width="1"/></svg>
<div class="t" style="left:113.7px;top:650.5px;font-size:6.03px;color:#3b3b3b;-webkit-text-stroke:0.1px #3b3b3b">Direct (3.28ms)</div>
<svg style="left:163.5px;top:651.1px" width="5.2" height="5.2" viewBox="0 0 10 10"><circle cx="5" cy="5" r="4.2" fill="none" stroke="#3b3b3b" stroke-width="1.1"/><path d="M3.3 3.3 L6.7 6.7 M6.7 3.3 L3.3 6.7" stroke="#3b3b3b" stroke-width="1.1"/></svg>
<div class="t" style="left:170.7px;top:650.5px;font-size:6px;color:#3b3b3b;-webkit-text-stroke:0.1px #3b3b3b">0</div>
<svg style="left:176.6px;top:651.1px" width="5.2" height="5" viewBox="0 0 10 9.6"><path d="M5 0.6 L9.5 9 H0.5Z" fill="none" stroke="#3b3b3b" stroke-width="1.1" stroke-linejoin="round"/><path d="M5 3.5 V6.2 M5 7.2 V7.8" stroke="#3b3b3b" stroke-width="0.9"/></svg>
<div class="t" style="left:183.8px;top:650.5px;font-size:6px;color:#3b3b3b;-webkit-text-stroke:0.1px #3b3b3b">0</div>
<svg style="left:194.6px;top:651.1px" width="5.2" height="5.2" viewBox="0 0 10 10"><path d="M2 1 Q0.3 3.5 2 6 M8 1 Q9.7 3.5 8 6 M3.6 2.2 Q2.8 3.5 3.6 4.8 M6.4 2.2 Q7.2 3.5 6.4 4.8 M5 4 L3 9.5 M5 4 L7 9.5" fill="none" stroke="#3b3b3b" stroke-width="1"/><circle cx="5" cy="3.5" r="0.9" fill="#3b3b3b"/></svg>
<div class="t" style="left:203px;top:650.5px;font-size:6px;color:#3b3b3b;-webkit-text-stroke:0.1px #3b3b3b">0</div>
<div class="t" style="left:660px;top:650.6px;font-size:5.9px;color:#3b3b3b;-webkit-text-stroke:0.1px #3b3b3b">Ln 1, Col 1</div>
<div class="t" style="left:696px;top:650.6px;font-size:5.9px;color:#3b3b3b;-webkit-text-stroke:0.1px #3b3b3b">Spaces: 4</div>
<div class="t" style="left:729px;top:650.6px;font-size:5.9px;color:#3b3b3b;-webkit-text-stroke:0.1px #3b3b3b">UTF-8</div>
<div class="t" style="left:753.6px;top:650.6px;font-size:5.9px;color:#3b3b3b;-webkit-text-stroke:0.1px #3b3b3b">LF</div>
<div class="t" style="left:767.6px;top:650.6px;font-size:5.9px;color:#3b3b3b;-webkit-text-stroke:0.1px #3b3b3b">C++</div>
<svg style="left:786.6px;top:650.8px" width="5.4" height="5.4" viewBox="0 0 10 10"><path d="M2 7.5 V4.5 A3 3 0 0 1 8 4.5 V7.5 H1 M4 9 H6" fill="none" stroke="#3b3b3b" stroke-width="1.1"/><circle cx="8.2" cy="2" r="1.7" fill="#3b3b3b"/></svg>

<svg style="left:794px;top:653px" width="6" height="6" viewBox="0 0 6 6"><path d="M6 0 V6 H0 Q5 5.5 6 0Z" fill="#2a2a2a"/></svg>

<div class="a" style="left:584.6px;top:592px;width:209.8px;height:50.4px;background:#fff;border-radius:2px;box-shadow:0 0 4px 0.5px rgba(0,0,0,0.17);border:0.5px solid #d8d8d8"></div>
<svg style="left:589.2px;top:598.7px" width="8" height="8" viewBox="0 0 8 8"><circle cx="4" cy="4" r="3.6" fill="none" stroke="#3d8fe0" stroke-width="0.7"/><path d="M4 3.4 V5.9" stroke="#3d8fe0" stroke-width="0.6"/><circle cx="4" cy="2.3" r="0.4" fill="#3d8fe0"/></svg>
<div class="t" style="left:599.7px;top:600.3px;font-size:6.3px;color:#3b3b3b;-webkit-text-stroke:0.1px #3b3b3b">Do you want to install the recommended 'C/C++ Extension</div>
<div class="t" style="left:599.7px;top:610.5px;font-size:6.3px;color:#3b3b3b;-webkit-text-stroke:0.1px #3b3b3b">Pack' extension from Microsoft for the C++ language?</div>
<svg style="left:769px;top:598.8px" width="8" height="8" viewBox="0 0 8 8"><circle cx="4" cy="4" r="1.2" fill="none" stroke="#555" stroke-width="0.6"/><circle cx="4" cy="4" r="3" fill="none" stroke="#555" stroke-width="0.75"/></svg>
<svg style="left:782.2px;top:600.6px" width="4.6" height="4.6" viewBox="0 0 8 8"><path d="M0.6 0.6 L7.4 7.4 M7.4 0.6 L0.6 7.4" stroke="#3b3b3b" stroke-width="0.8"/></svg>
<div class="a" style="left:672px;top:623px;width:38px;height:12.7px;background:#005fb8;border-radius:1.5px"></div>
<div class="t" style="left:676.4px;top:627px;font-size:6px;color:#fff;-webkit-text-stroke:0.1px #fff">Install</div>
<div class="a" style="left:697.1px;top:625.3px;width:0.5px;height:8px;background:#6b9fd6"></div>
<svg style="left:701.6px;top:628px" width="4.4" height="2.6" viewBox="0 0 4.5 3"><path d="M0.4 0.5 L2.25 2.5 L4.1 0.5" fill="none" stroke="#fff" stroke-width="0.55"/></svg>
<div class="a" style="left:714.8px;top:623px;width:75.3px;height:12.7px;background:#e5e5e5;border-radius:1.5px"></div>
<div class="t" style="left:719.6px;top:627px;font-size:5.85px;color:#3b3b3b;-webkit-text-stroke:0.1px #3b3b3b">Show Recommendations</div>
<!-- mouse cursor I-beam -->
<svg style="left:657.6px;top:583.6px" width="3.6" height="7" viewBox="0 0 4 8"><path d="M0.3 0.5 H3.7 M2 0.5 V7.5 M0.3 7.5 H3.7" fill="none" stroke="#222" stroke-width="0.8"/></svg>

</div></body></html>
